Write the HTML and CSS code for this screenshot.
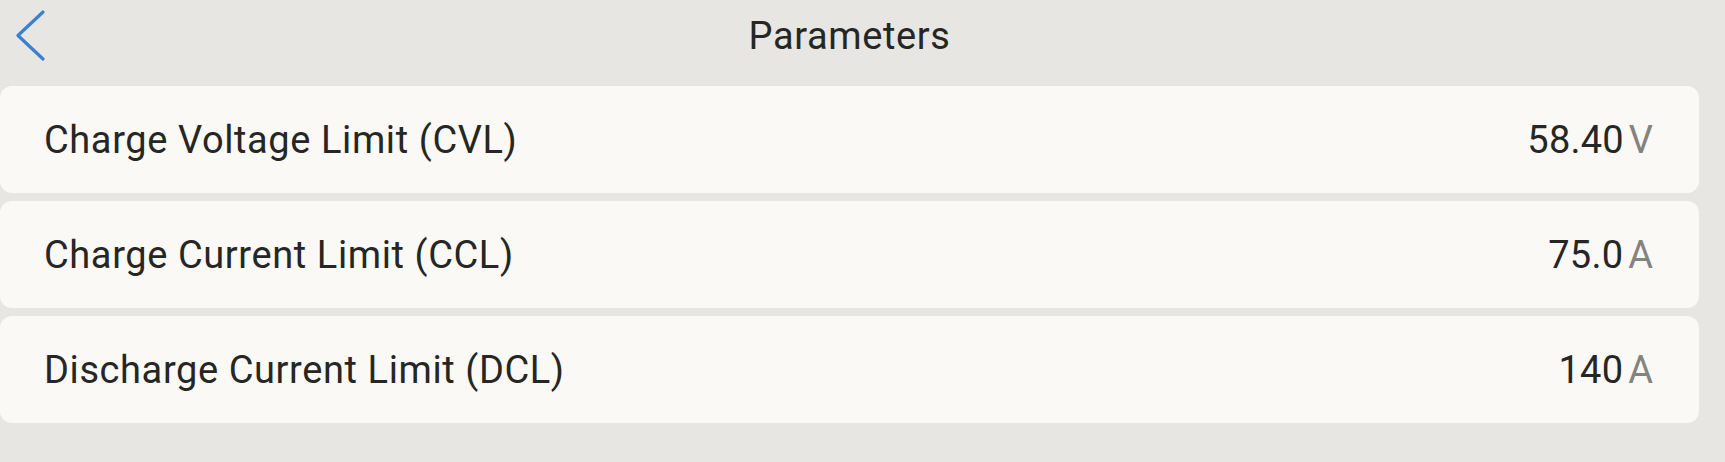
FILE: index.html
```html
<!DOCTYPE html>
<html lang="en">
  <head>
    <title>Parameters</title>
    <link rel="stylesheet" href="styles.css">
  </head>

  <body>
    <div class="page">
      <div class="header">
        <a class="back" href="#">
          <svg width="32" height="52" viewBox="0 0 32 52">
            <polyline points="27,2 2,25.5 27,49" fill="none" stroke="#3a80d2" stroke-width="3.2" stroke-linecap="round" stroke-linejoin="round" />
          </svg>
        </a>
        <h1>Parameters</h1>
        <div></div>
      </div>

      <div class="list">
        <div class="row">
          <span class="label">Charge Voltage Limit (CVL)</span>
          <span class="value">58.40<span class="unit">V</span></span>
        </div>
        <div class="row">
          <span class="label">Charge Current Limit (CCL)</span>
          <span class="value">75.0<span class="unit">A</span></span>
        </div>
        <div class="row">
          <span class="label">Discharge Current Limit (DCL)</span>
          <span class="value">140<span class="unit">A</span></span>
        </div>
      </div>
    </div>
  </body>
</html>
```

FILE: styles.css
```css
body {
  margin: 0;
  padding: 0;
  font-family: Roboto, "Liberation Sans", sans-serif;
  letter-spacing: 0.6px;
  color: #262624;
  background-color: #e7e6e3;
}

.page {
  width: 1699px;
}

.header {
  display: grid;
  grid-template-columns: 1fr auto 1fr;
  align-items: center;
  height: 86px;
}

.back {
  display: flex;
  align-items: center;
  padding-left: 16px;
  margin-top: -14px;
}

.header h1 {
  margin: 0 0 14px;
  font-size: 38px;
  font-weight: 400;
  color: #262624;
}

.list {
  display: flex;
  flex-direction: column;
  gap: 8px;
}

.row {
  display: flex;
  justify-content: space-between;
  align-items: center;
  height: 107px;
  padding: 0 46px 0 44px;
  background-color: #faf9f6;
  border-radius: 12px;
  font-size: 38px;
}

.value {
  display: flex;
  align-items: baseline;
  letter-spacing: 0.2px;
}

.unit {
  margin-left: 5px;
  letter-spacing: 0;
  color: #838380;
}
```
